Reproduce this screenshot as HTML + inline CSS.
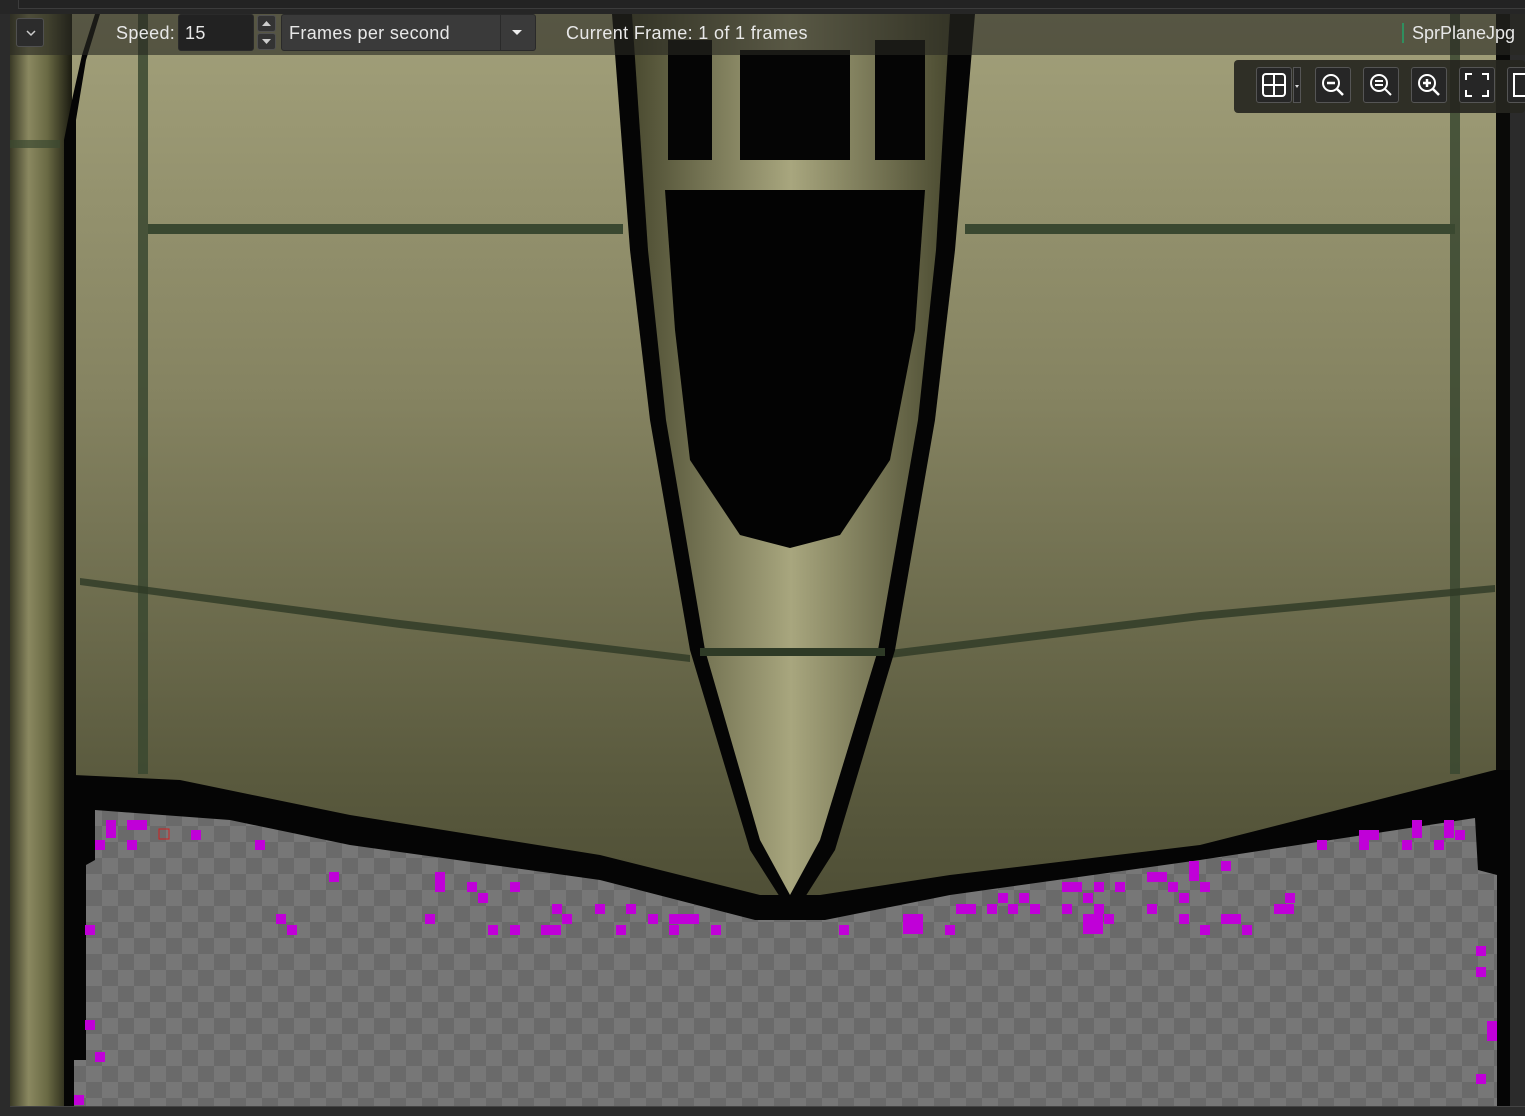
<!DOCTYPE html>
<html><head><meta charset="utf-8"><style>
html,body{margin:0;padding:0;background:#2b2b2b;width:1525px;height:1116px;overflow:hidden;font-family:"Liberation Sans",sans-serif}
#top{position:absolute;left:0;top:0;width:1525px;height:14px;background:#262626}
#top div{position:absolute;left:18px;top:0;right:0;height:8px;border-bottom:1px solid #3c3c3c;border-left:1px solid #3c3c3c;background:#232323}
svg{position:absolute;left:0;top:0}
.bar{position:absolute;left:10px;top:14px;width:1515px;height:41px;background:rgba(40,40,34,0.62)}
.t{position:absolute;color:#e8e8e8;font-size:18px;top:23px;letter-spacing:0.35px}
.btn{position:absolute;background:#2a2a2a;border:1px solid #505050;border-radius:3px;box-sizing:border-box}
.tb{position:absolute;left:1234px;top:60px;width:291px;height:53px;background:rgba(38,38,32,0.92);border-radius:4px}
.ib{position:absolute;top:67px;width:36px;height:36px;background:#262626;border:1px solid #555;border-radius:3px;box-sizing:border-box}
</style></head><body>
<div id="top"><div></div></div>
<svg width="1525" height="1116" viewBox="0 0 1525 1116">
<defs>
<linearGradient id="bg" x1="0" y1="0" x2="0" y2="1">
<stop offset="0" stop-color="#a2a07a"/><stop offset="0.35" stop-color="#858361"/><stop offset="0.7" stop-color="#5a5a3e"/><stop offset="1" stop-color="#3c3c28"/>
</linearGradient>
<linearGradient id="nose" x1="0" y1="0" x2="1" y2="0">
<stop offset="0" stop-color="#4a4a30"/><stop offset="0.5" stop-color="#a8a67e"/><stop offset="1" stop-color="#4a4a30"/>
</linearGradient>
<linearGradient id="ls" x1="0" y1="0" x2="1" y2="0">
<stop offset="0" stop-color="#3a3a26"/><stop offset="0.3" stop-color="#8a8860"/><stop offset="0.6" stop-color="#6a6a44"/><stop offset="1" stop-color="#1a1a10"/>
</linearGradient>
<pattern id="ck" width="32" height="32" patternUnits="userSpaceOnUse" x="86" y="810">
<rect width="32" height="32" fill="#6a6a6a"/><rect width="16" height="16" fill="#777"/><rect x="16" y="16" width="16" height="16" fill="#777"/>
</pattern>
</defs>
<rect x="10" y="14" width="1500" height="1092" fill="url(#bg)"/>
<rect x="10" y="14" width="62" height="1092" fill="url(#ls)"/>
<rect x="10" y="140" width="50" height="8" fill="#3a4830" opacity="0.7"/>
<path d="M64 140 L72 100 L82 55 L95 14 L100 14 L86 60 L76 120 L76 1106 L64 1106Z" fill="#050505"/>
<rect x="1496" y="14" width="14" height="1092" fill="#0a0a08"/>
<rect x="1510" y="14" width="15" height="1102" fill="#2b2b2b"/>
<rect x="138" y="14" width="10" height="760" fill="#3a4830" opacity="0.85"/>
<rect x="1450" y="14" width="10" height="760" fill="#3a4830" opacity="0.85"/>
<rect x="148" y="224" width="475" height="10" fill="#3a4830"/>
<rect x="965" y="224" width="490" height="10" fill="#3a4830"/>
<path d="M80 578 L400 620 L690 655 L690 662 L400 628 L80 585Z" fill="#2e3a26" opacity="0.8"/>
<path d="M1495 585 L1200 612 L890 650 L890 658 L1200 620 L1495 592Z" fill="#2e3a26" opacity="0.8"/>
<path d="M612 14 L630 250 L650 420 L690 650 L750 850 L785 905 L800 905 L835 850 L895 650 L935 420 L955 250 L975 14Z" fill="#050505"/>
<path d="M632 14 L648 250 L666 420 L705 650 L760 840 L790 895 L820 840 L878 650 L918 420 L936 250 L950 14Z" fill="url(#nose)"/>
<rect x="668" y="40" width="44" height="120" fill="#050505"/>
<rect x="740" y="50" width="110" height="110" fill="#050505"/>
<rect x="875" y="40" width="50" height="120" fill="#050505"/>
<path d="M665 190 L925 190 L915 330 L890 460 L840 535 L790 548 L740 535 L690 460 L675 330Z" fill="#030303"/>
<rect x="700" y="648" width="185" height="8" fill="#2e3a26"/>
<path d="M74 775 L180 780 L350 815 L600 855 L760 895 L820 895 L950 875 L1200 845 L1495 770 L1510 770 L1510 1106 L74 1106Z" fill="#050505"/>
<path d="M95 810 L230 820 L350 845 L600 880 L755 920 L825 920 L950 895 L1200 860 L1475 818 L1478 870 L1497 875 L1497 1106 L74 1106 L74 1060 L86 1060 L86 865 L95 860Z" fill="url(#ck)"/>
<g fill="#c000d8">
<rect x="106" y="820" width="10" height="18"/><rect x="127" y="820" width="20" height="10"/><rect x="95" y="840" width="10" height="10"/><rect x="127" y="840" width="10" height="10"/><rect x="191" y="830" width="10" height="10"/><rect x="255" y="840" width="10" height="10"/><rect x="329" y="872" width="10" height="10"/><rect x="276" y="914" width="10" height="10"/><rect x="287" y="925" width="10" height="10"/><rect x="85" y="925" width="10" height="10"/><rect x="85" y="1020" width="10" height="10"/><rect x="95" y="1052" width="10" height="10"/><rect x="74" y="1095" width="10" height="10"/>
<rect x="435" y="872" width="10" height="20"/><rect x="467" y="882" width="10" height="10"/><rect x="478" y="893" width="10" height="10"/><rect x="510" y="882" width="10" height="10"/><rect x="425" y="914" width="10" height="10"/><rect x="488" y="925" width="10" height="10"/><rect x="510" y="925" width="10" height="10"/><rect x="541" y="925" width="20" height="10"/><rect x="552" y="904" width="10" height="10"/><rect x="562" y="914" width="10" height="10"/><rect x="595" y="904" width="10" height="10"/><rect x="616" y="925" width="10" height="10"/><rect x="626" y="904" width="10" height="10"/><rect x="648" y="914" width="10" height="10"/><rect x="669" y="914" width="30" height="10"/><rect x="669" y="925" width="10" height="10"/><rect x="711" y="925" width="10" height="10"/><rect x="839" y="925" width="10" height="10"/><rect x="903" y="914" width="20" height="20"/><rect x="945" y="925" width="10" height="10"/><rect x="956" y="904" width="20" height="10"/><rect x="987" y="904" width="10" height="10"/><rect x="998" y="893" width="10" height="10"/><rect x="1019" y="893" width="10" height="10"/><rect x="1008" y="904" width="10" height="10"/><rect x="1030" y="904" width="10" height="10"/><rect x="1062" y="882" width="20" height="10"/><rect x="1062" y="904" width="10" height="10"/><rect x="1083" y="893" width="10" height="10"/><rect x="1083" y="914" width="20" height="20"/><rect x="1094" y="882" width="10" height="10"/><rect x="1094" y="904" width="10" height="10"/><rect x="1104" y="914" width="10" height="10"/><rect x="1115" y="882" width="10" height="10"/><rect x="1147" y="872" width="20" height="10"/><rect x="1147" y="904" width="10" height="10"/><rect x="1168" y="882" width="10" height="10"/><rect x="1179" y="893" width="10" height="10"/><rect x="1179" y="914" width="10" height="10"/><rect x="1189" y="861" width="10" height="20"/><rect x="1200" y="882" width="10" height="10"/><rect x="1200" y="925" width="10" height="10"/><rect x="1221" y="861" width="10" height="10"/><rect x="1221" y="914" width="20" height="10"/><rect x="1242" y="925" width="10" height="10"/><rect x="1274" y="904" width="20" height="10"/><rect x="1285" y="893" width="10" height="10"/><rect x="1317" y="840" width="10" height="10"/><rect x="1359" y="830" width="20" height="10"/><rect x="1359" y="840" width="10" height="10"/><rect x="1402" y="840" width="10" height="10"/><rect x="1412" y="820" width="10" height="18"/><rect x="1434" y="840" width="10" height="10"/><rect x="1444" y="820" width="10" height="18"/><rect x="1455" y="830" width="10" height="10"/><rect x="1476" y="946" width="10" height="10"/><rect x="1476" y="967" width="10" height="10"/><rect x="1487" y="1021" width="10" height="20"/><rect x="1476" y="1074" width="10" height="10"/>
</g>
<rect x="159" y="829" width="10" height="10" fill="none" stroke="#d02020" stroke-width="1"/>
<rect x="10" y="1106" width="1515" height="10" fill="#2b2b2b"/>
<rect x="10" y="1106" width="1515" height="1" fill="#444"/>
<rect x="0" y="14" width="10" height="1102" fill="#2b2b2b"/>
</svg>
<div class="bar"></div>
<div class="btn" style="left:16px;top:18px;width:28px;height:29px;background:#2c2c2c"><svg width="28" height="28" style="position:absolute;left:0;top:0"><path d="M10 12 L14 16 L18 12" fill="none" stroke="#ccc" stroke-width="1.5"/></svg></div>
<div class="t" style="left:116px">Speed:</div>
<div class="btn" style="top:14px;width:76px;height:37px;background:#222;border-color:#2a2a2a;left:178px"></div>
<div class="t" style="left:185px">15</div>
<div class="btn" style="left:257px;top:15px;width:19px;height:17px;background:#333"><svg width="17" height="15" style="position:absolute"><path d="M4 10 L8.5 5 L13 10Z" fill="#ccc"/></svg></div>
<div class="btn" style="left:257px;top:33px;width:19px;height:17px;background:#333"><svg width="17" height="15" style="position:absolute"><path d="M4 5 L8.5 10 L13 5Z" fill="#ccc"/></svg></div>
<div class="btn" style="left:281px;top:14px;width:255px;height:37px;background:#3a3a3a;border-color:#2a2a2a"></div>
<div style="position:absolute;left:500px;top:15px;width:1px;height:35px;background:#2a2a2a"></div>
<svg width="14" height="10" style="left:510px;top:28px"><path d="M2 2 L12 2 L7 7Z" fill="#eee"/></svg>
<div class="t" style="left:289px">Frames per second</div>
<div class="t" style="left:566px">Current Frame: 1 of 1 frames</div>
<div style="position:absolute;left:1402px;top:23px;width:2px;height:20px;background:#2f8f5f"></div>
<div class="t" style="left:1412px;letter-spacing:0">SprPlaneJpg</div>
<div class="tb"></div>
<div class="ib" style="left:1256px"><svg width="34" height="34" style="position:absolute"><rect x="6" y="6" width="22" height="22" rx="3" fill="none" stroke="#fff" stroke-width="2"/><path d="M17 6 V28 M6 17 H28" stroke="#fff" stroke-width="2"/></svg></div>
<div style="position:absolute;left:1293px;top:67px;width:8px;height:36px;background:#262626;border:1px solid #555;box-sizing:border-box"><svg width="8" height="34" style="position:absolute;left:0"><path d="M1 17 L5 17 L3 20Z" fill="#ddd"/></svg></div>
<div class="ib" style="left:1315px"><svg width="34" height="34" style="position:absolute"><circle cx="15" cy="15" r="8" fill="none" stroke="#fff" stroke-width="2"/><path d="M11 15 H19 M21 21 L27 27" stroke="#fff" stroke-width="2.5"/></svg></div>
<div class="ib" style="left:1363px"><svg width="34" height="34" style="position:absolute"><circle cx="15" cy="15" r="8" fill="none" stroke="#fff" stroke-width="2"/><path d="M11 13 H19 M11 17 H19 M21 21 L27 27" stroke="#fff" stroke-width="2"/></svg></div>
<div class="ib" style="left:1411px"><svg width="34" height="34" style="position:absolute"><circle cx="15" cy="15" r="8" fill="none" stroke="#fff" stroke-width="2"/><path d="M11 15 H19 M15 11 V19 M21 21 L27 27" stroke="#fff" stroke-width="2.5"/></svg></div>
<div class="ib" style="left:1459px"><svg width="34" height="34" style="position:absolute"><path d="M6 12 V6 H12 M22 6 H28 V12 M28 22 V28 H22 M12 28 H6 V22" fill="none" stroke="#fff" stroke-width="2"/></svg></div>
<div class="ib" style="left:1507px;width:30px"><svg width="20" height="34" style="position:absolute"><rect x="6" y="6" width="20" height="22" fill="none" stroke="#fff" stroke-width="2"/></svg></div>
</body></html>
